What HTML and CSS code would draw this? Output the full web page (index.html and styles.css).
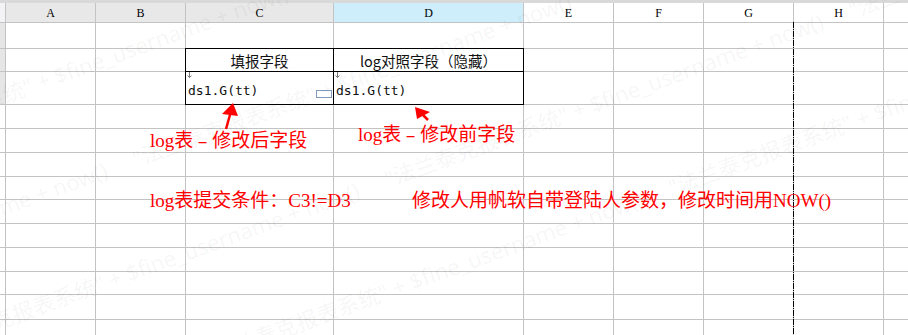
FILE: index.html
```html
<!DOCTYPE html>
<html lang="zh-CN">
  <head>
    <meta charset="UTF-8">
    <title>填报日志</title>
    <link rel="stylesheet" href="styles.css">
  </head>
  <body>
    <div class="sheet">
      <div class="topbar"></div>
      <div class="grid" id="grid">
        <!-- шапка колонок -->
        <div class="corner"></div>
        <div class="col-head">A</div>
        <div class="col-head">B</div>
        <div class="col-head">C</div>
        <div class="col-head col-head_active">D</div>
        <div class="col-head col-head_plain">E</div>
        <div class="col-head col-head_plain">F</div>
        <div class="col-head col-head_plain">G</div>
        <div class="col-head col-head_plain">H</div>
        <div class="col-head col-head_plain"></div>
        <!-- строка 1 -->
        <div class="row-head row-head_active"></div>
        <div class="cell"></div>
        <div class="cell"></div>
        <div class="cell"></div>
        <div class="cell"></div>
        <div class="cell"></div>
        <div class="cell"></div>
        <div class="cell"></div>
        <div class="cell"></div>
        <div class="cell"></div>
        <!-- строка 2: заголовки -->
        <div class="row-head row-head_active"></div>
        <div class="cell"></div>
        <div class="cell"></div>
        <div class="cell cell_boxed cell_title">填报字段</div>
        <div class="cell cell_boxed cell_title">log对照字段（隐藏）</div>
        <div class="cell"></div>
        <div class="cell"></div>
        <div class="cell"></div>
        <div class="cell"></div>
        <div class="cell"></div>
        <!-- строка 3: формулы -->
        <div class="row-head row-head_active"></div>
        <div class="cell"></div>
        <div class="cell"></div>
        <div class="cell cell_boxed cell_formula">
          <svg class="expand-mark" width="5" height="6" viewBox="0 0 5 6"><path d="M2.5 0V5.5M0.5 3.5L2.5 5.5L4.5 3.5" fill="none" stroke="#7a7a7a" stroke-width="1"/></svg>
          ds1.G(tt)
          <span class="cell-handle"></span>
        </div>
        <div class="cell cell_boxed cell_formula">
          <svg class="expand-mark" width="5" height="6" viewBox="0 0 5 6"><path d="M2.5 0V5.5M0.5 3.5L2.5 5.5L4.5 3.5" fill="none" stroke="#7a7a7a" stroke-width="1"/></svg>
          ds1.G(tt)
        </div>
        <div class="cell"></div>
        <div class="cell"></div>
        <div class="cell"></div>
        <div class="cell"></div>
        <div class="cell"></div>
      </div>

      <!-- водяной знак -->
      <div class="watermark">
        <div class="watermark__rows" id="watermark"></div>
      </div>

      <!-- разрыв страницы -->
      <div class="page-break"></div>

      <!-- стрелки к ячейкам -->
      <svg class="arrows" width="908" height="335" viewBox="0 0 908 335">
        <line x1="226" y1="129" x2="230.5" y2="113" stroke="#f00" stroke-width="2.5"/>
        <polygon points="233,103 222,114 238,116" fill="#f00"/>
        <line x1="423" y1="115" x2="428" y2="120" stroke="#f00" stroke-width="2.5"/>
        <polygon points="415,107 417,119 430,112" fill="#f00"/>
      </svg>

      <p class="note note_after">log表<span class="note__dash">-</span>修改后字段</p>
      <p class="note note_before">log表<span class="note__dash">-</span>修改前字段</p>
      <p class="note note_condition">log表提交条件：C3!=D3</p>
      <p class="note note_params">修改人用帆软自带登陆人参数，修改时间用NOW()</p>
    </div>
    <script>
      // пустые строки листа
      const grid = document.getElementById('grid');
      for (let r = 4; r <= 13; r++) {
        const head = document.createElement('div');
        head.className = 'row-head';
        grid.appendChild(head);
        for (let c = 0; c < 9; c++) {
          const cell = document.createElement('div');
          cell.className = 'cell';
          grid.appendChild(cell);
        }
      }

      // водяной знак повторяется по диагонали
      const wm = document.getElementById('watermark');
      const mark = '"法兰泰克报表系统" + $fine_username + now()';
      for (let i = 0; i < 8; i++) {
        const row = document.createElement('div');
        row.className = 'watermark__row';
        row.textContent = Array(5).fill(mark).join('     ');
        wm.appendChild(row);
      }
    </script>
  </body>
</html>
```

FILE: styles.css
```css
/* Основа */
html,
body {
  margin: 0;
  padding: 0;
}

body {
  width: 908px;
  height: 335px;
  overflow: hidden;
  background: #fff;
  font-family: "Noto Sans CJK SC", sans-serif;
}

.sheet {
  position: relative;
  width: 908px;
  height: 335px;
  overflow: hidden;
}

.topbar {
  height: 3px;
  background: #d9d9d9;
}

/* Сетка листа */
.grid {
  display: grid;
  grid-template-columns: 5px 89px 89px 147px 189px 89px 89px 89px 89px 89px;
  grid-template-rows: 19px 25px 22px 32px 23px 23px 23px 22px 23px 23px 23px 22px 24px 23px;
  gap: 1px;
  background: #c3c3c3;
}

.corner {
  background: #f3f3f5;
}

.col-head {
  display: flex;
  align-items: center;
  justify-content: center;
  padding-top: 1px;
  background: #e8e8e8;
  font-family: "Liberation Serif", serif;
  font-size: 12px;
  color: #000;
}

.col-head_active {
  background: #cdeefa;
}

.col-head_plain {
  background: #fff;
}

.row-head {
  background: #fff;
}

.row-head_active {
  background: #e6e6e6;
}

.cell {
  position: relative;
  background: #fff;
}

.cell_boxed {
  outline: 1px solid #000;
}

.cell_title {
  display: flex;
  align-items: center;
  justify-content: center;
  font-size: 14.5px;
  color: #111;
}

.cell_formula {
  display: flex;
  align-items: center;
  padding: 4px 0 0 2px;
  font-family: "DejaVu Sans Mono", monospace;
  font-size: 13px;
  color: #111;
}

.expand-mark {
  position: absolute;
  left: 1px;
  top: 0;
}

.cell-handle {
  position: absolute;
  right: 1px;
  bottom: 6px;
  width: 14px;
  height: 6px;
  border: 1px solid #7f9bc4;
  background: #fff;
}

/* Водяной знак */
.watermark {
  position: absolute;
  inset: 0;
  overflow: hidden;
  pointer-events: none;
}

.watermark__rows {
  position: absolute;
  left: -300px;
  top: -260px;
  transform: rotate(-20deg);
  transform-origin: 0 0;
}

.watermark__row {
  height: 105px;
  white-space: pre;
  font-family: "Noto Sans", "Noto Sans CJK SC", sans-serif;
  font-size: 22px;
  color: rgba(0, 0, 0, 0.05);
}

.watermark__row:nth-child(even) {
  margin-left: -230px;
}

/* Разрыв страницы */
.page-break {
  position: absolute;
  left: 793px;
  top: 22px;
  bottom: 0;
  width: 1px;
  background: repeating-linear-gradient(to bottom, #000 0, #000 6px, transparent 6px, transparent 7px, #000 7px, #000 8px, transparent 8px, transparent 9px);
}

/* Пометки */
.arrows {
  position: absolute;
  left: 0;
  top: 0;
}

.note {
  position: absolute;
  margin: 0;
  font-family: "Liberation Serif", "Noto Sans CJK SC", serif;
  font-size: 19px;
  line-height: 19px;
  color: #f00;
  white-space: nowrap;
}

.note__dash {
  display: inline-block;
  width: 19px;
  text-align: center;
  transform: scaleX(1.6);
}

.note_after {
  left: 150px;
  top: 131px;
}

.note_before {
  left: 358px;
  top: 125px;
}

.note_condition {
  left: 150px;
  top: 191px;
}

.note_params {
  left: 412px;
  top: 191px;
}
```
